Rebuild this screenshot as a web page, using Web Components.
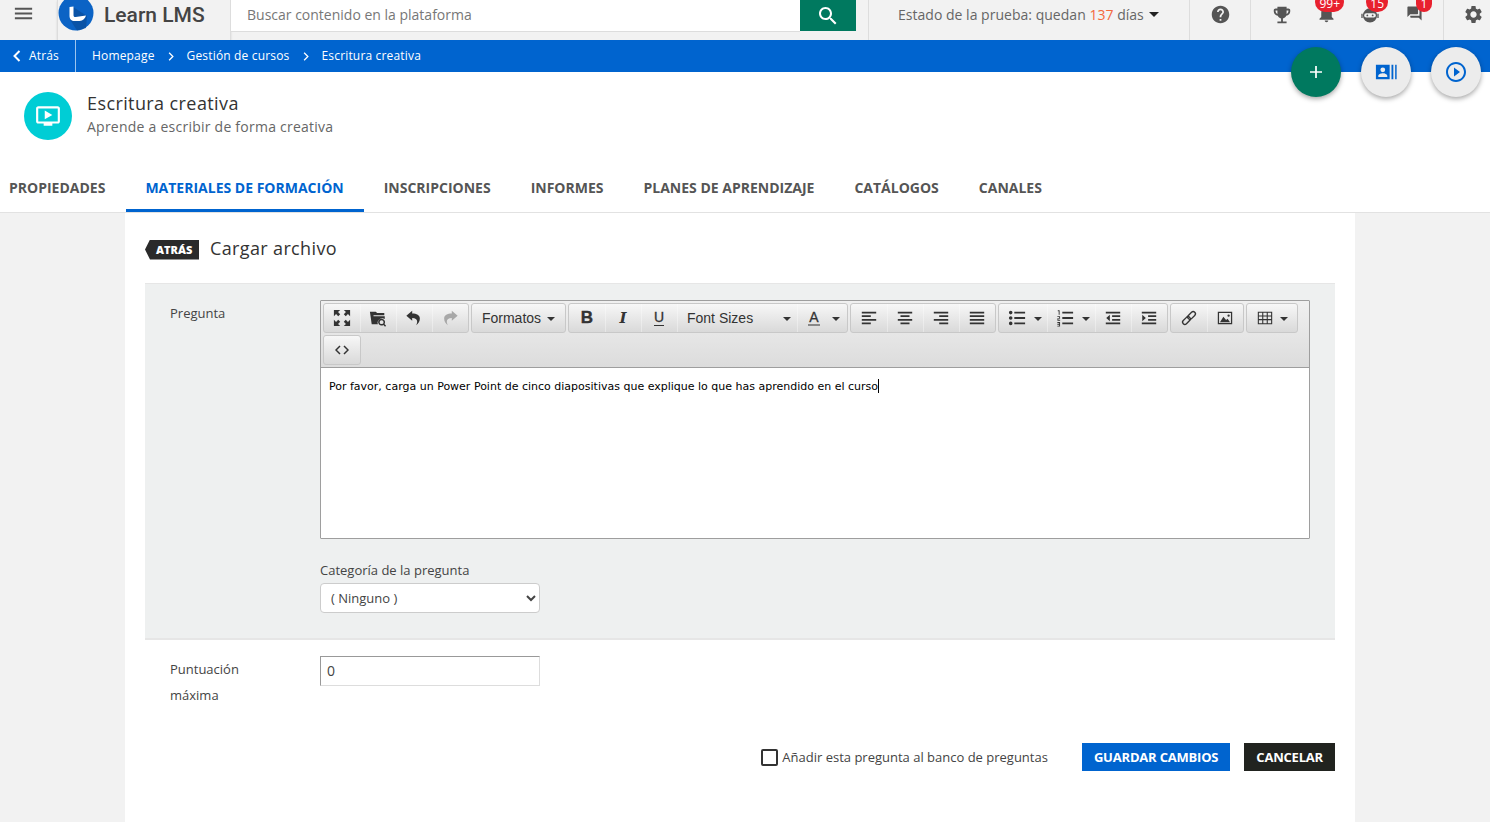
<!DOCTYPE html>
<html lang="es">
<head>
<meta charset="utf-8">
<title>Escritura creativa</title>
<style>
  html, body { margin: 0; height: 100%; overflow: hidden; }
  body { background: #f2f2f2; font-family: "Open Sans", "Liberation Sans", sans-serif; color: #333; }
  lms-page { height: 822px; }
</style>
</head>
<body>
<lms-page>
  <lms-topbar></lms-topbar>
  <lms-crumbs></lms-crumbs>
  <lms-fabs></lms-fabs>
  <lms-coursehead title-text="Escritura creativa" sub="Aprende a escribir de forma creativa"></lms-coursehead>
  <lms-tabs></lms-tabs>
  <lms-card>
    <lms-cardhead></lms-cardhead>
    <lms-question>
      <rich-editor></rich-editor>
    </lms-question>
    <lms-score></lms-score>
    <lms-actions></lms-actions>
  </lms-card>
</lms-page>

<script>
const PATHS = {
  menu: 'M3 18h18v-2H3v2zm0-5h18v-2H3v2zm0-7v2h18V6H3z',
  search: 'M15.5 14h-.79l-.28-.27C15.41 12.59 16 11.11 16 9.5 16 5.91 13.09 3 9.5 3S3 5.91 3 9.5 5.91 16 9.5 16c1.61 0 3.09-.59 4.23-1.57l.27.28v.79l5 4.99L20.49 19l-4.99-5zm-6 0C7.01 14 5 11.99 5 9.5S7.01 5 9.5 5 14 7.01 14 9.5 11.99 14 9.5 14z',
  help: 'M12 2C6.48 2 2 6.48 2 12s4.48 10 10 10 10-4.48 10-10S17.52 2 12 2zm1 17h-2v-2h2v2zm2.07-7.75l-.9.92C13.45 12.9 13 13.5 13 15h-2v-.5c0-1.1.45-2.1 1.17-2.83l1.24-1.26c.37-.36.59-.86.59-1.41 0-1.1-.9-2-2-2s-2 .9-2 2H8c0-2.21 1.79-4 4-4s4 1.79 4 4c0 .88-.36 1.68-.93 2.25z',
  trophy: 'M19 5h-2V3H7v2H5c-1.1 0-2 .9-2 2v1c0 2.55 1.92 4.63 4.39 4.94.63 1.5 1.98 2.63 3.61 2.96V19H7v2h10v-2h-4v-3.1c1.63-.33 2.98-1.46 3.61-2.96C19.08 12.63 21 10.55 21 8V7c0-1.1-.9-2-2-2zM5 8V7h2v3.82C5.84 10.4 5 9.3 5 8zm14 0c0 1.3-.84 2.4-2 2.82V7h2v1z',
  bell: 'M12 22c1.1 0 2-.9 2-2h-4c0 1.1.89 2 2 2zm6-6v-5c0-3.07-1.64-5.64-4.5-6.32V4c0-.83-.67-1.5-1.5-1.5s-1.5.67-1.5 1.5v.68C7.63 5.36 6 7.92 6 11v5l-2 2v1h16v-1l-2-2z',
  bot: 'M12 4a8.5 8.5 0 1 0 0 17 8.5 8.5 0 0 0 0-17zM7.5 10h9a2.5 2.5 0 0 1 0 5h-9a2.5 2.5 0 0 1 0-5zM8.8 11.4a1.1 1.1 0 1 0 0 2.2 1.1 1.1 0 0 0 0-2.2zM15.2 11.4a1.1 1.1 0 1 0 0 2.2 1.1 1.1 0 0 0 0-2.2zM1.6 10.5h1.6v5H1.6zM20.8 10.5h1.6v5h-1.6z',
  chat: 'M21 6h-2v9H6v2c0 .55.45 1 1 1h11l4 4V7c0-.55-.45-1-1-1zm-4 6V3c0-.55-.45-1-1-1H3c-.55 0-1 .45-1 1v14l4-4h10c.55 0 1-.45 1-1z',
  gear: 'M19.14 12.94c.04-.3.06-.61.06-.94 0-.32-.02-.64-.07-.94l2.03-1.58c.18-.14.23-.41.12-.61l-1.92-3.32c-.12-.22-.37-.29-.59-.22l-2.39.96c-.5-.38-1.03-.7-1.62-.94l-.36-2.54c-.04-.24-.24-.41-.48-.41h-3.84c-.24 0-.43.17-.47.41l-.36 2.54c-.59.24-1.13.57-1.62.94l-2.39-.96c-.22-.08-.47 0-.59.22L2.74 8.87c-.12.21-.08.47.12.61l2.03 1.58c-.05.3-.09.63-.09.94s.02.64.07.94l-2.03 1.58c-.18.14-.23.41-.12.61l1.92 3.32c.12.22.37.29.59.22l2.39-.96c.5.38 1.03.7 1.62.94l.36 2.54c.05.24.24.41.48.41h3.84c.24 0 .44-.17.47-.41l.36-2.54c.59-.24 1.13-.56 1.62-.94l2.39.96c.22.08.47 0 .59-.22l1.92-3.32c.12-.22.07-.47-.12-.61l-2.01-1.58zM12 15.6c-1.98 0-3.6-1.62-3.6-3.6s1.62-3.6 3.6-3.6 3.6 1.62 3.6 3.6-1.62 3.6-3.6 3.6z',
  screen: 'M21 3H3c-1.11 0-2 .89-2 2v12c0 1.1.89 2 2 2h5v2h8v-2h5c1.1 0 1.99-.9 1.99-2L23 5c0-1.11-.9-2-2-2zm0 14H3V5h18v12zm-5-6l-7 4V7z',
  card: 'M1 4h15v16H1zM8.5 7a2.6 2.6 0 1 0 0 5.2 2.6 2.6 0 0 0 0-5.2zM3.6 17.4h9.8v-1.2c0-1.9-3.2-2.8-4.9-2.8s-4.9.9-4.9 2.8zM18 4h2v16h-2zM22 4h1.6v16H22z',
  play: 'M10 16.5l6-4.5-6-4.5v9zM12 2C6.48 2 2 6.48 2 12s4.48 10 10 10 10-4.48 10-10S17.52 2 12 2zm0 18c-4.41 0-8-3.59-8-8s3.59-8 8-8 8 3.59 8 8-3.59 8-8 8z',
  // editor toolbar glyphs, on a 20 unit box
  fullscreen: 'M1 1h7L5.6 3.4 8 5.8 5.8 8 3.4 5.6 1 8zM19 1v7l-2.4-2.4L14.2 8 12 5.8l2.4-2.4L12 1zM1 19v-7l2.4 2.4L5.8 12 8 14.2l-2.4 2.4L8 19zM19 19h-7l2.4-2.4L12 14.2l2.2-2.2 2.4 2.4L19 12z',
  browse: 'M1 3h6.5L9 4.5h8V7H5v1h12.5v3.2a5 5 0 0 0-7.6 5.8H3zM14 10.8a3.8 3.8 0 1 0 2 7l1.8 1.9 1.2-1.2-1.8-1.9a3.8 3.8 0 0 0-3.2-5.8zm0 1.6a2.2 2.2 0 1 1 0 4.4 2.2 2.2 0 0 1 0-4.4z',
  undo: 'M8 2L1.5 7.5 8 13v-3c3.5 0 5.5 1.5 5.5 4 0 1.5-.5 3-1 4 2.5-2 4-4.5 4-7.5C16.5 7 13 5 8 5z',
  redo: 'M12 2l6.5 5.5L12 13v-3c-3.5 0-5.5 1.5-5.5 4 0 1.5.5 3 1 4-2.5-2-4-4.5-4-7.5C3.5 7 7 5 12 5z',
  alignleft: 'M2 3h16v2H2zM2 7h10v2H2zM2 11h16v2H2zM2 15h10v2H2z',
  aligncenter: 'M2 3h16v2H2zM5 7h10v2H5zM2 11h16v2H2zM5 15h10v2H5z',
  alignright: 'M2 3h16v2H2zM8 7h10v2H8zM2 11h16v2H2zM8 15h10v2H8z',
  justify: 'M2 3h16v2H2zM2 7h16v2H2zM2 11h16v2H2zM2 15h16v2H2z',
  bullist: 'M1 4a2 2 0 1 0 4 0 2 2 0 0 0-4 0zM1 10a2 2 0 1 0 4 0 2 2 0 0 0-4 0zM1 16a2 2 0 1 0 4 0 2 2 0 0 0-4 0zM7 3h12v2H7zM7 9h12v2H7zM7 15h12v2H7z',
  numlist: 'M2 1.5h2v5H3V2.5H2zM1.5 8h3v2.8H2.6v1.2h2v1h-3v-2.8h1.9V9H1.5zM1.5 14.5h3v5h-3v-1h2v-1h-2v-1h2v-1h-2zM7 3h12v2H7zM7 9h12v2H7zM7 15h12v2H7z',
  outdent: 'M2 3h16v2H2zM9 7h9v2H9zM9 11h9v2H9zM2 15h16v2H2zM6.5 6.5v7L2.5 10z',
  indent: 'M2 3h16v2H2zM9 7h9v2H9zM9 11h9v2H9zM2 15h16v2H2zM2.5 6.5v7l4-3.5z',
  image: 'M2 3h16v14H2zM3.4 4.4v11.2h13.2V4.4zM4.4 14.6l3.8-6 3 3.6 1.6-1.4 2.8 3.8zM14 6a1.3 1.3 0 1 0 0 2.6A1.3 1.3 0 0 0 14 6z',
  table: 'M2 3h16v14H2zM3.2 4.2v2.9h3.7V4.2zm4.9 0v2.9h3.8V4.2zm5 0v2.9h3.7V4.2zM3.2 8.3v2.9h3.7V8.3zm4.9 0v2.9h3.8V8.3zm5 0v2.9h3.7V8.3zM3.2 12.4v3.4h3.7v-3.4zm4.9 0v3.4h3.8v-3.4zm5 0v3.4h3.7v-3.4z'
};

class UiIcon extends HTMLElement {
  connectedCallback() {
    const size = this.getAttribute('size') || 24;
    const box = this.getAttribute('box') || 24;
    this.attachShadow({ mode: 'open' }).innerHTML = `
      <style>
        :host { display: inline-flex; width: ${size}px; height: ${size}px; flex: none; }
        svg { width: 100%; height: 100%; display: block; fill: currentColor; }
      </style>
      <svg viewBox="0 0 ${box} ${box}"><path fill-rule="evenodd" d="${PATHS[this.getAttribute('name')]}"/></svg>`;
  }
}
customElements.define('ui-icon', UiIcon);

class LmsPage extends HTMLElement {
  constructor() {
    super();
    this.attachShadow({ mode: 'open' }).innerHTML = `
      <style>
        :host { display: flex; flex-direction: column; position: relative; overflow: hidden; }
      </style>
      <slot></slot>`;
  }
}
customElements.define('lms-page', LmsPage);

class LmsTopbar extends HTMLElement {
  constructor() {
    super();
    const tool = (name, size, top, badge, w) => `
      <span class="tool" style="width:${w || 44}px;padding-top:${top}px">
        <ui-icon name="${name}" size="${size}"></ui-icon>
        ${badge ? `<b class="badge">${badge}</b>` : ''}
      </span>`;
    this.attachShadow({ mode: 'open' }).innerHTML = `
      <style>
        :host { display: flex; height: 40px; flex: none; background: #f2f2f2; color: #555; font-size: 14px; }
        .burger { width: 57px; flex: none; display: flex; align-items: flex-start; padding: 2px 0 0 12px; box-sizing: border-box; color: #555; }
        .logo { width: 174px; flex: none; box-sizing: border-box; display: flex; gap: 10px; border: solid #ddd; border-width: 0 1px; box-shadow: 0 1px 2px rgba(0,0,0,.12); }
        .logo svg { width: 36px; height: 36px; margin: -5px 0 0 0; flex: none; }
        .logo span { font: 500 21px/30px Roboto, "Open Sans", sans-serif; color: #444; }
        .search { flex: 1; display: flex; height: 32px; }
        .search div { flex: 1; background: #fff; border-bottom: 1px solid #ddd; padding-left: 16px; line-height: 30px; color: #777; }
        .search button { width: 56px; border: 0; padding: 0; background: #00795f; color: #fff; display: flex; align-items: center; justify-content: center; height: 31px; }
        .trial { width: 321px; flex: none; margin-left: 12px; box-sizing: border-box; border-left: 1px solid #ddd; padding-left: 29px; line-height: 30px; color: #666; display: flex; align-items: flex-start; letter-spacing: .02px; white-space: pre; }
        .trial em { font-style: normal; color: #f4683c; }
        .trial i { border: 5px solid transparent; border-top: 5px solid #222; border-bottom: 0; margin: 12px 0 0 5px; }
        .sect { flex: none; box-sizing: border-box; border-left: 1px solid #ddd; display: flex; }
        .tool { position: relative; display: flex; justify-content: center; box-sizing: border-box; color: #555; }
        .badge { position: absolute; top: -8px; right: 4px; min-width: 8px; padding: 0 4px; height: 20px; border-radius: 10px; background: #e8212e; color: #fff; font: 400 12px/24px "Open Sans", sans-serif; text-align: center; }
      </style>
      <div class="burger"><ui-icon name="menu" size="23"></ui-icon></div>
      <div class="logo">
        <svg viewBox="0 0 36 36">
          <circle cx="18" cy="18" r="17.5" fill="#0b63c5"/>
          <path d="M15 12l14 9-1 12-9 2.5-7-11z" fill="#0a4f9e" opacity=".8"/>
          <path d="M11.5 12l4-.5v8.5c0 1.5.8 2.2 2.2 2L28 20.5c-.7 3-3 5.3-6.5 5.5h-5c-3 0-5-2-5-5z" fill="#fff"/>
        </svg>
        <span>Learn LMS</span>
      </div>
      <div class="search">
        <div>Buscar contenido en la plataforma</div>
        <button><ui-icon name="search" size="24"></ui-icon></button>
      </div>
      <div class="trial">Estado de la prueba: quedan <em>137</em> días<i></i></div>
      <div class="sect" style="width:61px">${tool('help', 21, 4, '', 60)}</div>
      <div class="sect" style="width:193px;padding-left:9px">
        ${tool('trophy', 22, 4)}${tool('bell', 21, 3, '99+')}${tool('bot', 20, 5, '15')}${tool('chat', 17, 5, '1')}
      </div>
      <div class="sect" style="width:47px;padding-left:12px">${tool('gear', 21, 4, '', 34)}</div>`;
  }
}
customElements.define('lms-topbar', LmsTopbar);

class LmsCrumbs extends HTMLElement {
  constructor() {
    super();
    const chev = `<svg viewBox="0 0 8 12" width="6" height="9"><path d="M1.5 1l5 5-5 5" fill="none" stroke="#fff" stroke-width="1.7"/></svg>`;
    this.attachShadow({ mode: 'open' }).innerHTML = `
      <style>
        :host { display: flex; height: 32px; flex: none; background: #0064cf; color: #fff; font-size: 12px; line-height: 32px; letter-spacing: .17px; font-weight: 500; }
        .back { width: 76px; box-sizing: border-box; border-right: 1px solid #9cc4ee; padding-left: 13px; display: flex; align-items: center; gap: 8px; }
        .back svg { width: 8px; height: 12px; }
        nav { display: flex; align-items: center; padding-left: 16px; gap: 13px; }
      </style>
      <div class="back"><svg viewBox="0 0 8 12"><path d="M6.5 1l-5 5 5 5" fill="none" stroke="#fff" stroke-width="2"/></svg>Atrás</div>
      <nav><span>Homepage</span>${chev}<span>Gestión de cursos</span>${chev}<span>Escritura creativa</span></nav>`;
  }
}
customElements.define('lms-crumbs', LmsCrumbs);

class LmsFabs extends HTMLElement {
  constructor() {
    super();
    this.attachShadow({ mode: 'open' }).innerHTML = `
      <style>
        :host { position: absolute; top: 47px; right: 9px; display: flex; gap: 20px; z-index: 2; }
        button { width: 50px; height: 50px; border-radius: 50%; border: 0; padding: 0; background: #ececec; color: #0064cf; box-shadow: 0 2px 5px rgba(0,0,0,.35); display: flex; align-items: center; justify-content: center; }
        .add { background: #00795f; color: #fff; }
        .add svg { width: 12px; height: 12px; }
      </style>
      <button class="add"><svg viewBox="0 0 14 14"><path d="M6 0h2v6h6v2H8v6H6V8H0V6h6z" fill="#fff"/></svg></button>
      <button><ui-icon name="card" size="22"></ui-icon></button>
      <button><ui-icon name="play" size="24"></ui-icon></button>`;
  }
}
customElements.define('lms-fabs', LmsFabs);

class LmsCoursehead extends HTMLElement {
  connectedCallback() {
    this.attachShadow({ mode: 'open' }).innerHTML = `
      <style>
        :host { display: flex; flex: none; background: #fff; padding: 20px 0 0 24px; height: 48px; gap: 15px; }
        .dot { width: 48px; height: 48px; border-radius: 50%; background: #00cdd5; color: #fff; display: flex; align-items: center; justify-content: center; }
        h1 { margin: -1px 0 1px; font: 500 18px/24px "Open Sans", sans-serif; color: #333; letter-spacing: .4px; }
        p { margin: 0; font: 500 14px/22px "Open Sans", sans-serif; color: #666; letter-spacing: .24px; }
      </style>
      <div class="dot"><ui-icon name="screen" size="26"></ui-icon></div>
      <div><h1>${this.getAttribute('title-text')}</h1><p>${this.getAttribute('sub')}</p></div>`;
  }
}
customElements.define('lms-coursehead', LmsCoursehead);

class LmsTabs extends HTMLElement {
  constructor() {
    super();
    const names = ['PROPIEDADES', 'MATERIALES DE FORMACIÓN', 'INSCRIPCIONES', 'INFORMES', 'PLANES DE APRENDIZAJE', 'CATÁLOGOS', 'CANALES'];
    this.attachShadow({ mode: 'open' }).innerHTML = `
      <style>
        :host { display: flex; flex: none; background: #fff; height: 73px; box-sizing: border-box; border-bottom: 1px solid #e2e2e2; overflow: hidden; }
        a { box-sizing: border-box; height: 72px; padding: 38px 20px 0; font: 700 14px/19px "Open Sans", sans-serif; color: #555; flex: none; }
        a.first { padding: 38px 21px 0 9px; }
        a.on { color: #0064cf; border-bottom: 3px solid #0064cf; padding-left: 19px; }
      </style>
      ${names.map((n, i) => `<a class="${i === 0 ? 'first' : i === 1 ? 'on' : ''}">${n}</a>`).join('')}`;
  }
}
customElements.define('lms-tabs', LmsTabs);

class LmsCard extends HTMLElement {
  constructor() {
    super();
    this.attachShadow({ mode: 'open' }).innerHTML = `
      <style>
        :host { display: block; flex: 1; box-sizing: border-box; width: 1230px; margin-left: 125px; padding: 0 20px; background: #fff; }
      </style>
      <slot></slot>`;
  }
}
customElements.define('lms-card', LmsCard);

class LmsCardhead extends HTMLElement {
  constructor() {
    super();
    this.attachShadow({ mode: 'open' }).innerHTML = `
      <style>
        :host { display: flex; align-items: center; height: 70px; box-sizing: border-box; padding-top: 3px; gap: 11px; }
        .back { width: 54px; height: 20px; box-sizing: border-box; background: #2a2a2a; color: #fff; font: 800 11px/20px "Open Sans", sans-serif; padding-left: 11px; clip-path: polygon(5px 0, 100% 0, 100% 100%, 5px 100%, 0 50%); }
        h2 { margin: -3px 0 0; font: 500 18px/24px "Open Sans", sans-serif; color: #333; letter-spacing: .36px; }
      </style>
      <span class="back">ATRÁS</span><h2>Cargar archivo</h2>`;
  }
}
customElements.define('lms-cardhead', LmsCardhead);

class LmsQuestion extends HTMLElement {
  constructor() {
    super();
    this.attachShadow({ mode: 'open' }).innerHTML = `
      <style>
        :host { display: flex; box-sizing: border-box; height: 357px; background: #eef0f0; border: solid #e6e6e6; border-width: 1px 0 2px; padding: 16px 25px 0; font-size: 13px; color: #444; }
        .lab { width: 150px; flex: none; line-height: 26px; }
        .main { flex: 1; }
        .cat { margin-top: 22px; line-height: 18px; }
        select { display: block; width: 220px; height: 30px; margin-top: 4px; border: 1px solid #ccc; border-radius: 4px; background: #fff; font: 13px "Open Sans", sans-serif; color: #444; padding-left: 6px; }
      </style>
      <div class="lab">Pregunta</div>
      <div class="main">
        <slot></slot>
        <div class="cat">Categoría de la pregunta</div>
        <select><option>( Ninguno )</option></select>
      </div>`;
  }
}
customElements.define('lms-question', LmsQuestion);

class TbGroup extends HTMLElement {
  constructor() {
    super();
    this.attachShadow({ mode: 'open' }).innerHTML = `
      <style>
        :host { display: flex; height: 28px; border: 1px solid #c8c8c8; border-radius: 3px; background: linear-gradient(#f7f7f7, #d9d9d9); flex: none; }
      </style>
      <slot></slot>`;
  }
}
customElements.define('tb-group', TbGroup);

class TbBtn extends HTMLElement {
  connectedCallback() {
    const w = this.getAttribute('w') || 36;
    const icon = this.getAttribute('icon');
    const caret = this.hasAttribute('caret');
    const gap = this.getAttribute('gap') || 6;
    this.attachShadow({ mode: 'open' }).innerHTML = `
      <style>
        :host { display: flex; align-items: center; justify-content: center; box-sizing: border-box; width: ${w}px; gap: ${gap}px; color: ${this.hasAttribute('off') ? '#a8a8a8' : '#333'}; font: 14px/28px "Liberation Sans", sans-serif; box-shadow: inset 1px 0 0 rgba(255,255,255,.35); flex: none; }
        :host(:first-child) { box-shadow: none; }
        :host([left]) { justify-content: flex-start; padding-left: 10px; }
        i { border: 4px solid transparent; border-top: 4px solid #333; border-bottom: 0; margin-top: 1px; }
        :host([spread]) i { margin-left: auto; margin-right: 6px; }
      </style>
      ${icon ? `<ui-icon name="${icon}" size="18" box="20"></ui-icon>` : ''}<slot></slot>${caret ? '<i></i>' : ''}`;
  }
}
customElements.define('tb-btn', TbBtn);

class RichEditor extends HTMLElement {
  constructor() {
    super();
    this.attachShadow({ mode: 'open' }).innerHTML = `
      <style>
        :host { display: block; width: 990px; height: 239px; box-sizing: border-box; border: 1px solid #9e9e9e; background: #fff; border-radius: 1px; }
        .bar { display: flex; flex-wrap: wrap; gap: 2px; row-gap: 2px; align-content: flex-start; box-sizing: border-box; height: 67px; padding: 2px 2px 0; background: linear-gradient(#f0f0f0, #dcdcdc); border-bottom: 1px solid #9e9e9e; }
        .g { font: 700 17px/28px "Liberation Sans", sans-serif; -webkit-text-stroke: .4px #333; }
        .it { font: italic 700 15px/28px "DejaVu Serif", serif; }
        .u { font: 400 14px/14px "Liberation Sans", sans-serif; -webkit-text-stroke: .3px #333; border-bottom: 1px solid #333; height: 15px; }
        .a { font: 400 14px/14px "Liberation Sans", sans-serif; -webkit-text-stroke: .3px #333; border-bottom: 2px solid #888; height: 14px; padding: 0 1px; }
        .code { width: 14px; height: 10px; display: block; }
        .link { width: 18px; height: 18px; display: block; }
        .body { height: 170px; box-sizing: border-box; padding: 10px 8px; font: 11px/17px "DejaVu Sans", Verdana, sans-serif; color: #000; }
        .caret { display: inline-block; width: 1px; height: 14px; background: #000; vertical-align: -3px; }
      </style>
      <div class="bar">
        <tb-group>
          <tb-btn icon="fullscreen"></tb-btn><tb-btn icon="browse"></tb-btn><tb-btn icon="undo"></tb-btn><tb-btn icon="redo" off></tb-btn>
        </tb-group>
        <tb-group><tb-btn w="93" caret>Formatos</tb-btn></tb-group>
        <tb-group>
          <tb-btn><span class="g">B</span></tb-btn><tb-btn><span class="it">I</span></tb-btn><tb-btn><span class="u">U</span></tb-btn>
          <tb-btn w="120" left spread caret>Font Sizes</tb-btn>
          <tb-btn w="50" gap="12" caret style="padding-left:4px"><span class="a">A</span></tb-btn>
        </tb-group>
        <tb-group>
          <tb-btn icon="alignleft"></tb-btn><tb-btn icon="aligncenter"></tb-btn><tb-btn icon="alignright"></tb-btn><tb-btn icon="justify"></tb-btn>
        </tb-group>
        <tb-group>
          <tb-btn w="48" gap="8" icon="bullist" caret style="padding-left:4px"></tb-btn><tb-btn w="48" gap="8" icon="numlist" caret style="padding-left:4px"></tb-btn><tb-btn icon="outdent"></tb-btn><tb-btn icon="indent"></tb-btn>
        </tb-group>
        <tb-group>
          <tb-btn><svg class="link" viewBox="0 0 20 20" fill="none" stroke="#333" stroke-width="1.5"><g transform="rotate(-45 10 10)"><rect x="1" y="7.5" width="10" height="5" rx="2.5"/><rect x="9" y="7.5" width="10" height="5" rx="2.5"/></g></svg></tb-btn><tb-btn icon="image"></tb-btn>
        </tb-group>
        <tb-group><tb-btn w="50" icon="table" caret></tb-btn></tb-group>
        <tb-group><tb-btn><svg class="code" viewBox="0 0 14 10" fill="none" stroke="#333" stroke-width="1.5"><path d="M5 1L1 5l4 4M9 1l4 4-4 4"/></svg></tb-btn></tb-group>
      </div>
      <div class="body">Por favor, carga un Power Point de cinco diapositivas que explique lo que has aprendido en el curso<span class="caret"></span></div>`;
  }
}
customElements.define('rich-editor', RichEditor);

class LmsScore extends HTMLElement {
  constructor() {
    super();
    this.attachShadow({ mode: 'open' }).innerHTML = `
      <style>
        :host { display: flex; padding: 16px 25px 0; font-size: 13px; color: #444; }
        .lab { width: 150px; flex: none; box-sizing: border-box; padding: 0 50px 0 0; line-height: 26px; }
        .box { width: 220px; height: 30px; box-sizing: border-box; background: #fff; border: 1px solid #ddd; border-top-color: #999; border-left-color: #999; padding-left: 6px; font-size: 14px; line-height: 28px; color: #444; }
      </style>
      <div class="lab">Puntuación máxima</div>
      <div class="box">0</div>`;
  }
}
customElements.define('lms-score', LmsScore);

class LmsActions extends HTMLElement {
  constructor() {
    super();
    this.attachShadow({ mode: 'open' }).innerHTML = `
      <style>
        :host { display: flex; justify-content: flex-end; align-items: center; margin-top: 35px; font-size: 13px; color: #444; }
        label { display: flex; align-items: center; gap: 4px; margin-right: 34px; }
        label i { width: 17px; height: 17px; box-sizing: border-box; border: 2px solid #333; border-radius: 2px; background: #fff; }
        button { height: 28px; border: 0; padding: 0 12px; font: 700 13px/28px "Open Sans", sans-serif; letter-spacing: -.2px; color: #fff; background: #0064cf; }
        .dark { background: #21231f; margin-left: 14px; }
      </style>
      <label><i></i>Añadir esta pregunta al banco de preguntas</label>
      <button>GUARDAR CAMBIOS</button><button class="dark">CANCELAR</button>`;
  }
}
customElements.define('lms-actions', LmsActions);
</script>
</body>
</html>
